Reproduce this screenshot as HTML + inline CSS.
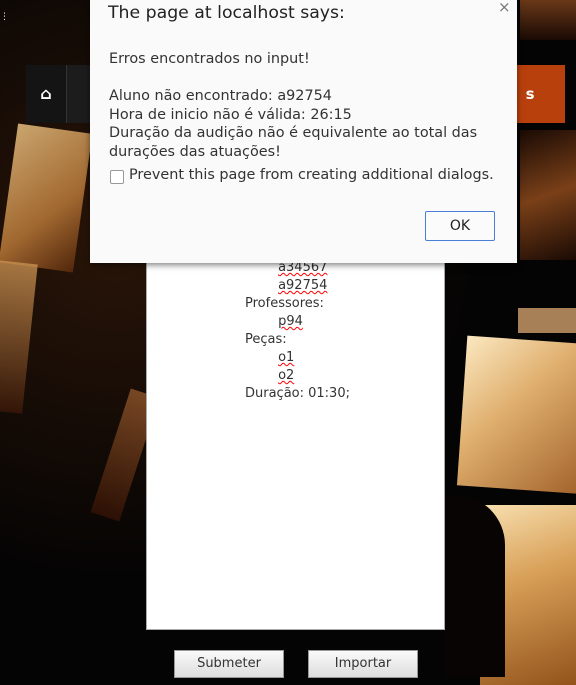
<!DOCTYPE html>
<html><head><meta charset="utf-8"><style>
body{margin:0;width:576px;height:672px;overflow:hidden;background:#050404;position:relative;font-family:"DejaVu Sans","Liberation Sans",sans-serif}
.a{position:absolute}
.sheet{position:absolute;background:linear-gradient(135deg,#e8c080,#b87838 60%,#5a2a0c)}
u{text-decoration:underline wavy red 1px}
</style></head><body>
<div class="a" style="left:0;top:0;width:576px;height:672px;background:radial-gradient(ellipse at 20% 35%,#2a1508,#050404 55%)"></div>
<div class="sheet" style="left:8px;top:128px;width:75px;height:140px;transform:rotate(8deg);opacity:.85"></div>
<div class="sheet" style="left:-10px;top:262px;width:40px;height:150px;transform:rotate(6deg);background:linear-gradient(180deg,#c89050,#3a1808);opacity:.8"></div>
<div class="sheet" style="left:110px;top:390px;width:30px;height:130px;transform:rotate(18deg);background:linear-gradient(180deg,#a06030,#3a1404);opacity:.7"></div>
<div class="sheet" style="left:462px;top:340px;width:130px;height:150px;transform:rotate(4deg);background:linear-gradient(135deg,#fbe8c0,#e0b070 40%,#a06028)"></div>
<div class="a" style="left:518px;top:308px;width:70px;height:25px;background:#a88058"></div>
<div class="sheet" style="left:480px;top:505px;width:110px;height:180px;background:linear-gradient(160deg,#f8e0b0,#d8a058 40%,#905018)"></div>
<div class="a" style="left:445px;top:495px;width:60px;height:182px;background:#080403;border-radius:0 50px 0 0"></div>
<div class="a" style="left:520px;top:0;width:56px;height:40px;background:linear-gradient(#6a3818,#1a0a04)"></div>
<div class="a" style="left:520px;top:130px;width:56px;height:130px;background:linear-gradient(160deg,#1a0a04,#7a4018 50%,#1a0a04)"></div>
<div class="a" style="left:0;top:15px;width:8px;height:10px;color:#fff;font-size:9px;line-height:4px">⋮</div>
<!-- nav -->
<div class="a" style="left:26px;top:65px;width:64px;height:58px;background:#1c1c1c"></div>
<div class="a" style="left:26px;top:65px;width:40px;height:58px;background:#141414;color:#fff;font-size:16px;text-align:center;line-height:58px;font-weight:bold">⌂</div>
<div class="a" style="left:66px;top:65px;width:1px;height:58px;background:#333"></div>
<div class="a" style="left:510px;top:65px;width:55px;height:58px;background:#b8400c;color:#fff;font-weight:bold;font-size:15px;line-height:58px">&nbsp;&nbsp;&nbsp;s</div>
<!-- textarea -->
<div class="a" style="left:146px;top:250px;width:297px;height:378px;background:#fff;border:1px solid #aaa;font-size:13px;color:#333;line-height:18px">
<div style="position:absolute;left:98px;top:8px;white-space:pre">        <u>a34567</u>
        <u>a92754</u>
Professores:
        <u>p94</u>
Peças:
        <u>o1</u>
        <u>o2</u>
Duração: 01:30;</div>
</div>
<div class="a" style="left:174px;top:650px;width:108px;height:26px;border:1px solid #999;background:linear-gradient(#fafafa,#ddd);font-size:13px;color:#333;text-align:center;line-height:26px">Submeter</div>
<div class="a" style="left:308px;top:650px;width:108px;height:26px;border:1px solid #999;background:linear-gradient(#fafafa,#ddd);font-size:13px;color:#333;text-align:center;line-height:26px">Importar</div>
<!-- dialog -->
<div class="a" style="left:90px;top:0;width:427px;height:263px;background:#fafafa;box-shadow:0 2px 6px rgba(0,0,0,.5);color:#222">
<div class="a" style="left:18px;top:3px;font-size:17.3px;color:#222">The page at localhost says:</div>
<div class="a" style="left:408px;top:-2px;font-size:15px;color:#777">×</div>
<div class="a" style="left:19px;top:50px;font-size:14.4px;line-height:18.5px;color:#333">Erros encontrados no input!<br><br>Aluno não encontrado: a92754<br>Hora de inicio não é válida: 26:15<br>Duração da audição não é equivalente ao total das<br>durações das atuações!</div>
<div class="a" style="left:20px;top:170px;width:12px;height:12px;border:1px solid #999;border-radius:2px;background:#fff"></div>
<div class="a" style="left:39px;top:167px;font-size:14.4px;color:#333">Prevent this page from creating additional dialogs.</div>
<div class="a" style="left:335px;top:211px;width:68px;height:28px;border:1px solid #4a7fd8;border-radius:2px;background:#fbfbfb;font-size:14px;text-align:center;line-height:28px;color:#222">OK</div>
</div>
</body></html>
